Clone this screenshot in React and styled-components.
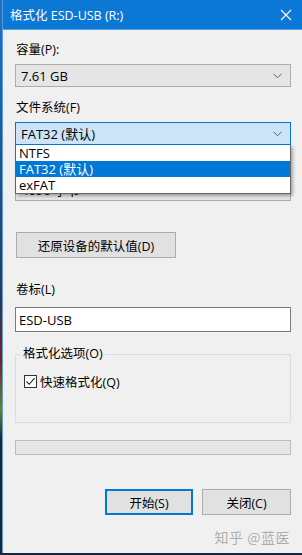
import styled, { createGlobalStyle } from 'styled-components';

const Global = createGlobalStyle`
    html, body {
        margin: 0;
        padding: 0;
        background: #16233a;
    }
    body {
        font-family: "Open Sans", "Noto Sans CJK SC", sans-serif;
        font-size: 12px;
        color: #000;
    }
`;

const Desktop = styled.div`
    width: 302px;
    height: 555px;
    display: flex;
    background: linear-gradient(180deg, #1a6fc4 0px, #1a6fc4 30px, #2a3a55 300px, #7a2020 360px, #5c8a2a 410px, #1a2438 440px);
    padding-bottom: 2px;
    box-sizing: border-box;
`;

const Window = styled.div`
    margin-left: 2px;
    flex: 1;
    display: flex;
    flex-direction: column;
    border-left: 1px solid #5a9be0;
    background: #f0f0f0;
`;

const TitleBar = styled.div`
    height: 30px;
    flex: none;
    display: flex;
    align-items: center;
    justify-content: space-between;
    padding: 0 10px 0 7px;
    background: #0c78d6;
    border-bottom: 1px solid #5aa2e6;
    box-sizing: border-box;
    color: #fff;
    font-size: 12.5px;
`;

const Body = styled.div`
    flex: 1;
    display: flex;
    flex-direction: column;
    padding: 0 11px 0 12px;
    position: relative;
`;

const Label = styled.div`
    line-height: 16px;
    margin-top: ${p => p.$top}px;
    font-size: 12.5px;
    padding-left: 1px;
    visibility: ${p => (p.$hidden ? 'hidden' : 'visible')};
`;

const SelectWrap = styled.div`
    position: relative;
    margin-top: ${p => p.$top}px;
`;

const Select = styled.div`
    height: 23px;
    box-sizing: border-box;
    display: flex;
    align-items: center;
    justify-content: space-between;
    padding: 0 8px 0 5px;
    font-size: 13px;
    background: ${p => (p.$active ? '#cce4f7' : '#e5e5e5')};
    border: 1px solid ${p => (p.$active ? '#0078d7' : '#acacac')};
`;

const Chevron = () => (
    <svg width="9" height="6" viewBox="0 0 9 6">
        <path d="M0.5 0.8 L4.5 4.8 L8.5 0.8" fill="none" stroke="#606060" strokeWidth="1" />
    </svg>
);

const DropList = styled.div`
    position: absolute;
    left: 0;
    right: 0;
    top: 100%;
    background: #fff;
    border: 1px solid #646464;
    border-top: none;
    box-shadow: 2px 2px 3px rgba(0, 0, 0, 0.3);
    z-index: 2;
`;

const Option = styled.div`
    height: 16px;
    line-height: 16px;
    padding-left: 3px;
    font-size: 13px;
    background: ${p => (p.$selected ? '#0078d7' : '#fff')};
    color: ${p => (p.$selected ? '#fff' : '#000')};
`;

const Button = styled.div`
    height: 26px;
    box-sizing: border-box;
    display: flex;
    align-items: center;
    justify-content: center;
    background: #e1e1e1;
    border: ${p => (p.$default ? '2px solid #0078d7' : '1px solid #adadad')};
    width: ${p => p.$w}px;
    font-size: 12.5px;
`;

const RestoreRow = styled.div`
    margin-top: 31px;
    padding-left: 1px;
`;

const Input = styled.div`
    margin-top: 9px;
    height: 25px;
    box-sizing: border-box;
    border: 1px solid #7a7a7a;
    background: #fff;
    display: flex;
    align-items: center;
    padding-left: 3px;
    font-size: 13px;
`;

const Group = styled.div`
    position: relative;
    margin-top: 22px;
    height: 69px;
    border: 1px solid #dcdcdc;
    box-sizing: border-box;
    padding: 17px 0 0 8px;
`;

const GroupTitle = styled.div`
    position: absolute;
    top: -9px;
    left: 5px;
    padding: 0 2px;
    background: #f0f0f0;
    line-height: 16px;
    font-size: 12.5px;
`;

const CheckRow = styled.div`
    display: flex;
    align-items: center;
    gap: 3px;
    font-size: 12.5px;
`;

const Box = styled.div`
    width: 13px;
    height: 13px;
    box-sizing: border-box;
    border: 1px solid #333;
    background: #fff;
    display: flex;
    align-items: center;
    justify-content: center;
`;

const Progress = styled.div`
    margin-top: 17px;
    height: 15px;
    box-sizing: border-box;
    border: 1px solid #bcbcbc;
    background: #e6e6e6;
`;

const Actions = styled.div`
    margin-top: 34px;
    display: flex;
    justify-content: flex-end;
    gap: 9px;
`;

const Watermark = styled.div`
    margin-top: 12px;
    align-self: flex-end;
    margin-right: 1px;
    font-family: "Noto Sans CJK SC", sans-serif;
    font-size: 14px;
    letter-spacing: 0.5px;
    color: rgba(160, 160, 160, 0.85);
`;

const App = () => {
    return (
        <>
            <Global />
            <Desktop>
                <Window>
                    <TitleBar>
                        <span>格式化 ESD-USB (R:)</span>
                        <svg width="12" height="12" viewBox="0 0 12 12">
                            <path d="M1 1 L11 11 M11 1 L1 11" stroke="#fff" strokeWidth="1.1" />
                        </svg>
                    </TitleBar>
                    <Body>
                        <Label $top={12}>容量(P):</Label>
                        <SelectWrap $top={6}>
                            <Select>
                                <span>7.61 GB</span>
                                <Chevron />
                            </Select>
                        </SelectWrap>

                        <Label $top={13}>文件系统(F)</Label>
                        <SelectWrap $top={6}>
                            <Select $active>
                                <span>FAT32 (默认)</span>
                                <Chevron />
                            </Select>
                            <DropList>
                                <Option>NTFS</Option>
                                <Option $selected>FAT32 (默认)</Option>
                                <Option>exFAT</Option>
                            </DropList>
                        </SelectWrap>

                        <Label $top={12} $hidden>分配单元大小(A)</Label>
                        <SelectWrap $top={5}>
                            <Select>
                                <span>4096 字节</span>
                                <Chevron />
                            </Select>
                        </SelectWrap>

                        <RestoreRow>
                            <Button $w={160}>还原设备的默认值(D)</Button>
                        </RestoreRow>

                        <Label $top={24}>卷标(L)</Label>
                        <Input>ESD-USB</Input>

                        <Group>
                            <GroupTitle>格式化选项(O)</GroupTitle>
                            <CheckRow>
                                <Box>
                                    <svg width="11" height="11" viewBox="0 0 11 11">
                                        <path d="M1.5 5.5 L4.2 8.3 L9.6 2.2" fill="none" stroke="#222" strokeWidth="1.1" />
                                    </svg>
                                </Box>
                                <span>快速格式化(Q)</span>
                            </CheckRow>
                        </Group>

                        <Progress />

                        <Actions>
                            <Button $w={88} $default>开始(S)</Button>
                            <Button $w={89}>关闭(C)</Button>
                        </Actions>

                        <Watermark>知乎 @蓝医</Watermark>
                    </Body>
                </Window>
            </Desktop>
        </>
    );
};

export default App;
